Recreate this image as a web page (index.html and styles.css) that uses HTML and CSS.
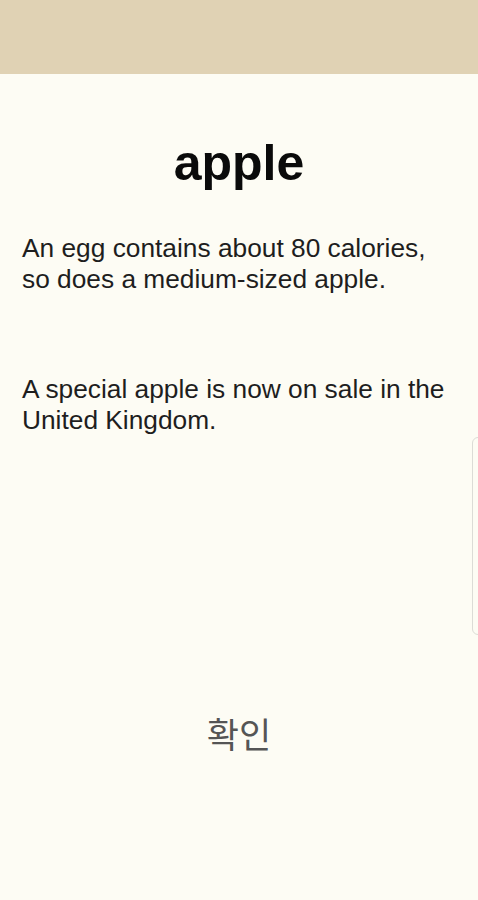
FILE: index.html
```html
<!DOCTYPE html>
<html lang="ko">
<head>
    <meta charset="UTF-8">
    <meta name="viewport" content="width=device-width, initial-scale=1.0">
    <title>apple</title>
    <link rel="stylesheet" href="styles.css">
</head>
<body>
    <div class="top-bar"></div>
    <div class="card">
        <h1 class="word">apple</h1>
        <p class="sentence">An egg contains about 80 calories, so does a medium-sized apple.</p>
        <p class="sentence second">A special apple is now on sale in the United Kingdom.</p>
        <div class="actions">
            <button type="button" class="confirm">확인</button>
        </div>
    </div>
    <!-- edge panel handle -->
    <div class="edge-handle"></div>
</body>
</html>
```

FILE: styles.css
```css
body {
    font-family: "Liberation Sans", Arial, sans-serif;
    background-color: #fdfcf4;
    margin: 0;
    padding: 0;
    height: 900px;
    overflow: hidden;
}

.top-bar {
    height: 74px;
    background-color: #e0d2b4;
}

.card {
    padding: 0 22px;
}

.word {
    margin: 64px 0 0;
    font-size: 50px;
    line-height: 50px;
    font-weight: bold;
    text-align: center;
    color: #0a0a0a;
}

.sentence {
    margin: 45px 0 0;
    font-size: 26.3px;
    line-height: 31px;
    color: #1e1e1e;
}

.sentence.second {
    margin-top: 79px;
}

.actions {
    margin-top: 277px;
    text-align: center;
}

.confirm {
    background: none;
    border: none;
    padding: 0;
    font-family: "Noto Sans CJK KR", sans-serif;
    font-size: 35px;
    line-height: 40px;
    color: #555555;
    cursor: pointer;
}

.edge-handle {
    position: absolute;
    top: 437px;
    right: -6px;
    width: 10px;
    height: 196px;
    border: 1px solid #dcdcd6;
    border-radius: 6px;
}
```
